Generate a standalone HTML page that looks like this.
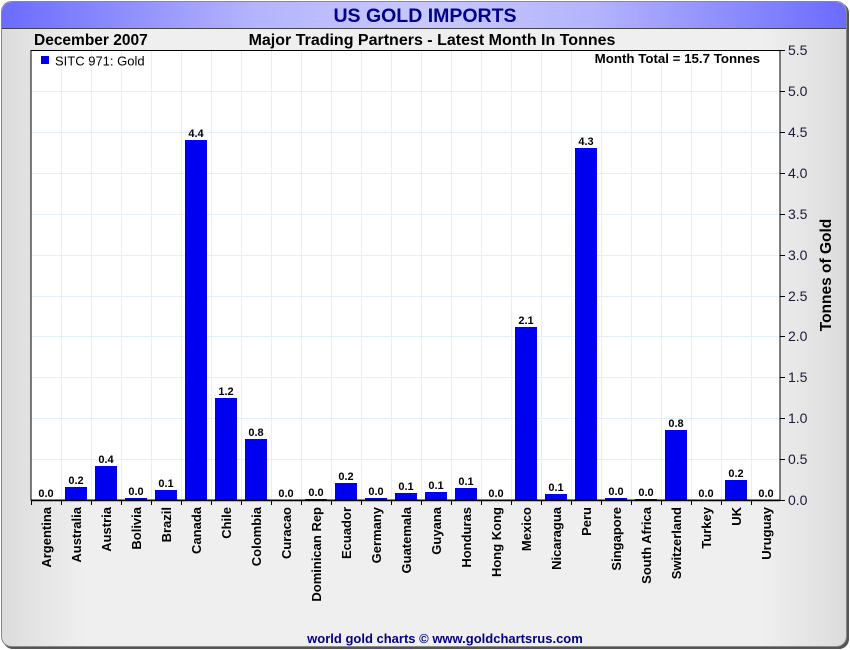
<!DOCTYPE html>
<html><head><meta charset="utf-8"><style>
html,body{margin:0;padding:0;background:#fff;}
svg{display:block;font-family:"Liberation Sans",Arial,sans-serif;}
</style></head><body>
<svg width="850" height="650" viewBox="0 0 850 650" xmlns="http://www.w3.org/2000/svg">
<defs>
<linearGradient id="bg" x1="0" y1="0" x2="1" y2="0">
<stop offset="0" stop-color="#dcdcdc"/><stop offset="0.1" stop-color="#efefef"/><stop offset="0.9" stop-color="#efefef"/><stop offset="1" stop-color="#dcdcdc"/></linearGradient>
<linearGradient id="hd" x1="0" y1="0" x2="1" y2="0">
<stop offset="0" stop-color="#6b6bff"/><stop offset="0.3" stop-color="#b4b4ff"/><stop offset="0.5" stop-color="#c8c8ff"/><stop offset="0.7" stop-color="#b4b4ff"/><stop offset="1" stop-color="#6b6bff"/></linearGradient>
</defs>
<rect x="0" y="0" width="850" height="650" fill="#fff"/>
<rect x="3" y="3" width="846" height="646" rx="10" fill="#555"/>
<rect x="1.5" y="1.5" width="845" height="645" rx="10" fill="url(#bg)" stroke="#888" stroke-width="1"/>
<path d="M2,28 V12 A10,10 0 0 1 12,2 H836 A10,10 0 0 1 846,12 V28 Z" fill="url(#hd)"/>
<line x1="2" y1="28.5" x2="846" y2="28.5" stroke="#444" stroke-width="1"/>
<text x="425" y="22" text-anchor="middle" font-size="19.5" font-weight="bold" fill="#00008b">US GOLD IMPORTS</text>
<text x="34" y="45" font-size="15.5" font-weight="bold" fill="#000">December 2007</text>
<text x="432" y="45" text-anchor="middle" font-size="16" font-weight="bold" fill="#000">Major Trading Partners - Latest Month In Tonnes</text>
<rect x="31" y="50" width="749" height="450" fill="#fff"/>
<g stroke="#e3f0fa" stroke-width="1">
<line x1="61.5" y1="50" x2="61.5" y2="500"/><line x1="91.5" y1="50" x2="91.5" y2="500"/><line x1="121.5" y1="50" x2="121.5" y2="500"/><line x1="151.5" y1="50" x2="151.5" y2="500"/><line x1="181.5" y1="50" x2="181.5" y2="500"/><line x1="211.5" y1="50" x2="211.5" y2="500"/><line x1="241.5" y1="50" x2="241.5" y2="500"/><line x1="271.5" y1="50" x2="271.5" y2="500"/><line x1="301.5" y1="50" x2="301.5" y2="500"/><line x1="331.5" y1="50" x2="331.5" y2="500"/><line x1="361.5" y1="50" x2="361.5" y2="500"/><line x1="391.5" y1="50" x2="391.5" y2="500"/><line x1="421.5" y1="50" x2="421.5" y2="500"/><line x1="451.5" y1="50" x2="451.5" y2="500"/><line x1="481.5" y1="50" x2="481.5" y2="500"/><line x1="511.5" y1="50" x2="511.5" y2="500"/><line x1="541.5" y1="50" x2="541.5" y2="500"/><line x1="571.5" y1="50" x2="571.5" y2="500"/><line x1="601.5" y1="50" x2="601.5" y2="500"/><line x1="631.5" y1="50" x2="631.5" y2="500"/><line x1="661.5" y1="50" x2="661.5" y2="500"/><line x1="691.5" y1="50" x2="691.5" y2="500"/><line x1="721.5" y1="50" x2="721.5" y2="500"/><line x1="751.5" y1="50" x2="751.5" y2="500"/>
<line x1="31" y1="91.5" x2="780" y2="91.5"/><line x1="31" y1="132.5" x2="780" y2="132.5"/><line x1="31" y1="173.5" x2="780" y2="173.5"/><line x1="31" y1="214.5" x2="780" y2="214.5"/><line x1="31" y1="255.5" x2="780" y2="255.5"/><line x1="31" y1="296.5" x2="780" y2="296.5"/><line x1="31" y1="336.5" x2="780" y2="336.5"/><line x1="31" y1="377.5" x2="780" y2="377.5"/><line x1="31" y1="418.5" x2="780" y2="418.5"/><line x1="31" y1="459.5" x2="780" y2="459.5"/>
</g>
<g fill="#0000f0">
<rect x="65" y="487" width="22" height="13"/>
<rect x="95" y="466" width="22" height="34"/>
<rect x="125" y="498" width="22" height="2"/>
<rect x="155" y="490" width="22" height="10"/>
<rect x="185" y="140" width="22" height="360"/>
<rect x="215" y="398" width="22" height="102"/>
<rect x="245" y="439" width="22" height="61"/>
<rect x="305" y="499" width="22" height="1"/>
<rect x="335" y="483" width="22" height="17"/>
<rect x="365" y="498" width="22" height="2"/>
<rect x="395" y="493" width="22" height="7"/>
<rect x="425" y="492" width="22" height="8"/>
<rect x="455" y="488" width="22" height="12"/>
<rect x="515" y="327" width="22" height="173"/>
<rect x="545" y="494" width="22" height="6"/>
<rect x="575" y="148" width="22" height="352"/>
<rect x="605" y="498" width="22" height="2"/>
<rect x="635" y="499" width="22" height="1"/>
<rect x="665" y="430" width="22" height="70"/>
<rect x="725" y="480" width="22" height="20"/>
</g>
<g font-size="11" font-weight="bold" fill="#000" text-anchor="middle">
<text x="46" y="497">0.0</text><text x="76" y="484">0.2</text><text x="106" y="463">0.4</text><text x="136" y="495">0.0</text><text x="166" y="487">0.1</text><text x="196" y="137">4.4</text><text x="226" y="395">1.2</text><text x="256" y="436">0.8</text><text x="286" y="497">0.0</text><text x="316" y="496">0.0</text><text x="346" y="480">0.2</text><text x="376" y="495">0.0</text><text x="406" y="490">0.1</text><text x="436" y="489">0.1</text><text x="466" y="485">0.1</text><text x="496" y="497">0.0</text><text x="526" y="324">2.1</text><text x="556" y="491">0.1</text><text x="586" y="145">4.3</text><text x="616" y="495">0.0</text><text x="646" y="496">0.0</text><text x="676" y="427">0.8</text><text x="706" y="497">0.0</text><text x="736" y="477">0.2</text><text x="766" y="497">0.0</text>
</g>
<rect x="31" y="50.5" width="749" height="449.5" fill="none" stroke="#000" stroke-width="1"/>
<line x1="31" y1="500.5" x2="780" y2="500.5" stroke="#000" stroke-width="1.5"/>
<g stroke="#000" stroke-width="1">
<line x1="31.5" y1="500" x2="31.5" y2="505"/><line x1="61.5" y1="500" x2="61.5" y2="505"/><line x1="91.5" y1="500" x2="91.5" y2="505"/><line x1="121.5" y1="500" x2="121.5" y2="505"/><line x1="151.5" y1="500" x2="151.5" y2="505"/><line x1="181.5" y1="500" x2="181.5" y2="505"/><line x1="211.5" y1="500" x2="211.5" y2="505"/><line x1="241.5" y1="500" x2="241.5" y2="505"/><line x1="271.5" y1="500" x2="271.5" y2="505"/><line x1="301.5" y1="500" x2="301.5" y2="505"/><line x1="331.5" y1="500" x2="331.5" y2="505"/><line x1="361.5" y1="500" x2="361.5" y2="505"/><line x1="391.5" y1="500" x2="391.5" y2="505"/><line x1="421.5" y1="500" x2="421.5" y2="505"/><line x1="451.5" y1="500" x2="451.5" y2="505"/><line x1="481.5" y1="500" x2="481.5" y2="505"/><line x1="511.5" y1="500" x2="511.5" y2="505"/><line x1="541.5" y1="500" x2="541.5" y2="505"/><line x1="571.5" y1="500" x2="571.5" y2="505"/><line x1="601.5" y1="500" x2="601.5" y2="505"/><line x1="631.5" y1="500" x2="631.5" y2="505"/><line x1="661.5" y1="500" x2="661.5" y2="505"/><line x1="691.5" y1="500" x2="691.5" y2="505"/><line x1="721.5" y1="500" x2="721.5" y2="505"/><line x1="751.5" y1="500" x2="751.5" y2="505"/>
<line x1="780" y1="50.5" x2="785" y2="50.5"/><line x1="780" y1="91.5" x2="785" y2="91.5"/><line x1="780" y1="132.5" x2="785" y2="132.5"/><line x1="780" y1="173.5" x2="785" y2="173.5"/><line x1="780" y1="214.5" x2="785" y2="214.5"/><line x1="780" y1="255.5" x2="785" y2="255.5"/><line x1="780" y1="296.5" x2="785" y2="296.5"/><line x1="780" y1="336.5" x2="785" y2="336.5"/><line x1="780" y1="377.5" x2="785" y2="377.5"/><line x1="780" y1="418.5" x2="785" y2="418.5"/><line x1="780" y1="459.5" x2="785" y2="459.5"/><line x1="780" y1="500.5" x2="785" y2="500.5"/>
</g>
<g font-size="14" fill="#1a1a3a">
<text x="788" y="55">5.5</text><text x="788" y="96">5.0</text><text x="788" y="137">4.5</text><text x="788" y="178">4.0</text><text x="788" y="219">3.5</text><text x="788" y="260">3.0</text><text x="788" y="301">2.5</text><text x="788" y="341">2.0</text><text x="788" y="382">1.5</text><text x="788" y="423">1.0</text><text x="788" y="464">0.5</text><text x="788" y="505">0.0</text>
</g>
<text transform="translate(831,275) rotate(-90)" text-anchor="middle" font-size="15.5" font-weight="bold" fill="#000">Tonnes of Gold</text>
<rect x="41" y="56" width="8" height="8" fill="#0000f0"/>
<text x="55" y="65.5" font-size="13" fill="#000">SITC 971: Gold</text>
<text x="760" y="63" text-anchor="end" font-size="13.3" font-weight="bold" fill="#000">Month Total = 15.7 Tonnes</text>
<g font-size="13" font-weight="bold" fill="#000" text-anchor="end">
<text transform="translate(51,507) rotate(-90)">Argentina</text>
<text transform="translate(81,507) rotate(-90)">Australia</text>
<text transform="translate(111,507) rotate(-90)">Austria</text>
<text transform="translate(141,507) rotate(-90)">Bolivia</text>
<text transform="translate(171,507) rotate(-90)">Brazil</text>
<text transform="translate(201,507) rotate(-90)">Canada</text>
<text transform="translate(231,507) rotate(-90)">Chile</text>
<text transform="translate(261,507) rotate(-90)">Colombia</text>
<text transform="translate(291,507) rotate(-90)">Curacao</text>
<text transform="translate(321,507) rotate(-90)">Dominican Rep</text>
<text transform="translate(351,507) rotate(-90)">Ecuador</text>
<text transform="translate(381,507) rotate(-90)">Germany</text>
<text transform="translate(411,507) rotate(-90)">Guatemala</text>
<text transform="translate(441,507) rotate(-90)">Guyana</text>
<text transform="translate(471,507) rotate(-90)">Honduras</text>
<text transform="translate(501,507) rotate(-90)">Hong Kong</text>
<text transform="translate(531,507) rotate(-90)">Mexico</text>
<text transform="translate(561,507) rotate(-90)">Nicaragua</text>
<text transform="translate(591,507) rotate(-90)">Peru</text>
<text transform="translate(621,507) rotate(-90)">Singapore</text>
<text transform="translate(651,507) rotate(-90)">South Africa</text>
<text transform="translate(681,507) rotate(-90)">Switzerland</text>
<text transform="translate(711,507) rotate(-90)">Turkey</text>
<text transform="translate(741,507) rotate(-90)">UK</text>
<text transform="translate(771,507) rotate(-90)">Uruguay</text>
</g>
<text x="445" y="643" text-anchor="middle" font-size="13" font-weight="bold" fill="#00008b">world gold charts © www.goldchartsrus.com</text>
</svg>
</body></html>
